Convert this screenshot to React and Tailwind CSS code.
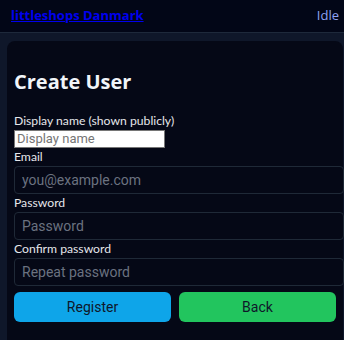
import React from 'react'

const label = "block text-[12.2px] leading-[18px] text-[#e5e7eb] font-['Lato',sans-serif]"
const field = "block w-[330px] h-[28px] rounded-[4px] border border-[#1f2937] bg-[#050816] px-[7px] text-[14px] text-[#e5e7eb] placeholder:text-[#6b7280] font-['Roboto',sans-serif] outline-none"

export default function App() {
  return (
    <div className="min-h-screen w-[344px] h-[340px] overflow-hidden bg-[#0f172a]">
      {/* top bar */}
      <header className="h-[33px] bg-[#020617] border-b border-[#1e293b] flex items-center justify-between pl-[11px] pr-[5px]">
        <a href="#" className="text-[13px] font-bold text-[#0000ee] underline font-['Open_Sans',sans-serif]">
          littleshops Danmark
        </a>
        <span className="text-[13px] text-[#8ea2f4] font-['Open_Sans',sans-serif]">Idle</span>
      </header>

      <main className="pt-[8px] pl-[7px]">
        <div className="w-[336px] h-[310px] rounded-[8px] bg-[#050816] p-[7px]">
          <h2 className="mt-[20px] mb-[16px] text-[20px] leading-[28px] font-bold text-[#f1f5f9] font-['Open_Sans',sans-serif]">
            Create User
          </h2>

          <label className={label}>Display name (shown publicly)</label>
          <input
            placeholder="Display name"
            className="block w-[151px] h-[18px] bg-white border border-[#767676] px-[2px] text-[13px] text-black placeholder:text-[#757575] font-['Roboto',sans-serif] outline-none"
          />

          <label className={label}>Email</label>
          <input placeholder="you@example.com" className={field} />

          <label className={label}>Password</label>
          <input type="password" placeholder="Password" className={field} />

          <label className={label}>Confirm password</label>
          <input type="password" placeholder="Repeat password" className={field} />

          <div className="mt-[6px] grid grid-cols-2 gap-[8px] w-[322px]">
            <button className="h-[30px] rounded-[6px] bg-[#0ea5e9] text-[14px] text-[#0f172a] font-['Roboto',sans-serif]">
              Register
            </button>
            <button className="h-[30px] rounded-[6px] bg-[#22c55e] text-[14px] text-[#0f172a] font-['Roboto',sans-serif]">
              Back
            </button>
          </div>
        </div>
      </main>
    </div>
  )
}
